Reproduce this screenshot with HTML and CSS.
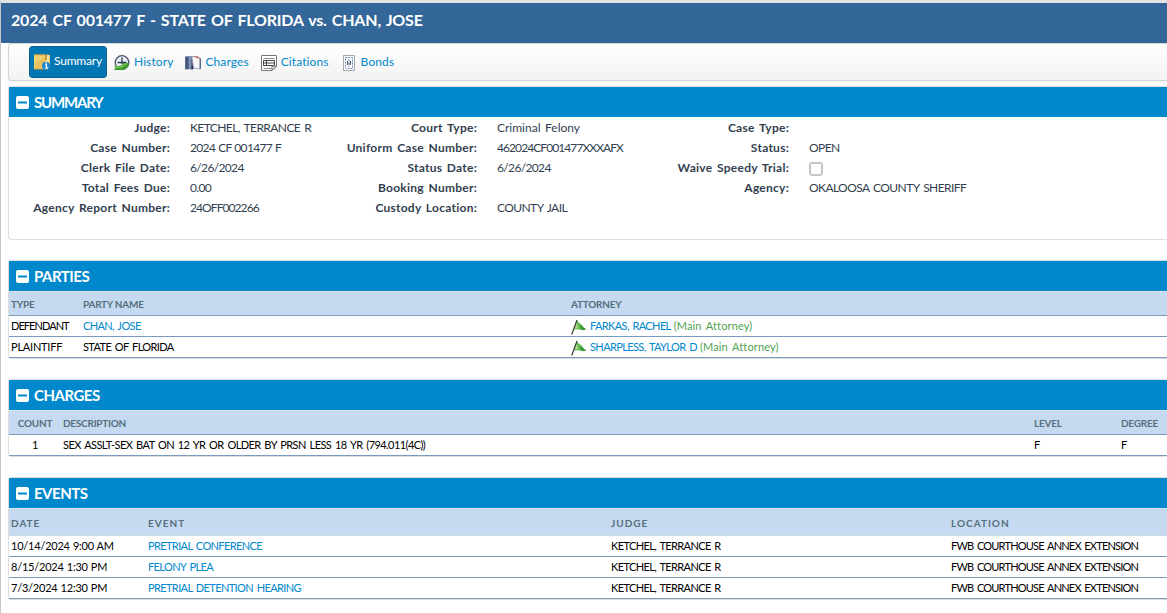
FILE: index.html
```
<!DOCTYPE html>
<html lang="en">
<head>
    <meta charset="UTF-8">
    <meta name="viewport" content="width=device-width, initial-scale=1.0">
    <title>2024 CF 001477 F</title>
    <link rel="stylesheet" href="styles.css">
</head>
<body>
    <svg class="sprites" xmlns="http://www.w3.org/2000/svg">
        <symbol id="minus" viewBox="0 0 13 13">
            <rect width="13" height="13" rx="2" fill="#fff"/>
            <rect x="2" y="5.5" width="9" height="2" fill="#0088cc"/>
        </symbol>
        <symbol id="flag" viewBox="0 0 16 16">
            <path d="M5.500 1C7 3 8.500 4.500 11 6c1 2 2 3.500 4.500 4.300-2.500 1.500-5 1.200-7.500 0L3 10.500z" fill="#5cb548"/>
            <path d="M5.500 2l2 7-4 1z" fill="#a5dc8b"/>
            <path d="M9 6l2 4.500 4-.2-3-2z" fill="#2f8f35"/>
            <path d="M6 1L.7 15.500" stroke="#3c3c3c" stroke-width="1.200" fill="none"/>
        </symbol>
    </svg>
    <div class="page">
        <header>
            <h1>2024 CF 001477 F - STATE OF FLORIDA vs. CHAN, JOSE</h1>
        </header>
        <nav class="toolbar">
            <a href="#" class="tab active">
                <svg width="16" height="16" viewBox="0 0 16 16">
                    <path d="M0 .5h15l1 1V14H14V15.500H0z" fill="#c99a3c"/>
                    <path d="M13 1h2.500v11H13z" fill="#f6e6a8"/>
                    <path d="M0 1h11v5h2v8.500H0z" fill="#f0cf73"/>
                    <path d="M0 .5h11v1H0z" fill="#d7a94a"/>
                    <path d="M1 9l10-6v11H1z" fill="#e3b64c" opacity=".6"/>
                    <circle cx="12" cy="11.800" r="4" fill="#1b86d0"/>
                    <path d="M11 10.800h1.500V14M11 14.200h3" stroke="#fff" stroke-width="1.200" fill="none"/>
                    <rect x="11.300" y="8.300" width="1.500" height="1.300" fill="#fff"/>
                </svg>
                <span>Summary</span>
            </a>
            <a href="#" class="tab">
                <svg width="16" height="16" viewBox="0 0 16 16">
                    <circle cx="8" cy="7.500" r="6.800" fill="#e9eff5" stroke="#49566a" stroke-width="1.300"/>
                    <path d="M8 2.500V9M3.500 7.500h9" stroke="#333e58" stroke-width="1.300"/>
                    <path d="M0 11.500L4 11c3 0 4.500-1 5-3h5.500v3c-1.500 3-5 4.200-9.500 4H0l1.500-2z" fill="#3e9c2f"/>
                    <path d="M1.500 12.300l3.500-.2c3 0 5-1.100 5.500-3h2" stroke="#9bdd72" stroke-width="1" fill="none"/>
                </svg>
                <span>History</span>
            </a>
            <a href="#" class="tab">
                <svg width="16" height="16" viewBox="0 0 16 16">
                    <path d="M0 1.500L7 1V14L0 14.500z" fill="#5a6d96"/>
                    <path d="M1.500 2.500h1V14h-1z" fill="#303e63"/>
                    <path d="M4 1.500L7 1v9l-2 4H4z" fill="#8494b5"/>
                    <path d="M7 1.500h5l3.500 2V14l-7 -1z" fill="#f7f7f9" stroke="#8791a8" stroke-width=".8"/>
                    <path d="M6.500 3l2 11-2 1z" fill="#2f3a58"/>
                    <path d="M8 1.500l4.500.3 3 2.500z" fill="#d34a3c"/>
                    <path d="M14.500 3.500H16V13.500h-1.500z" fill="#5c6780"/>
                </svg>
                <span>Charges</span>
            </a>
            <a href="#" class="tab">
                <svg width="16" height="16" viewBox="0 0 16 16">
                    <path d="M.5.500h15v10.500l-4.500 4.500H.5z" fill="#fff" stroke="#777"/>
                    <path d="M2.500 3.500h11M2.500 13.500h8" stroke="#888" fill="none"/>
                    <path d="M2.500 5.500h11v5h-11zM2.500 8h11M5.500 5.500v5" stroke="#444" fill="none"/>
                    <path d="M11 15.500V11h4.500z" fill="#eee" stroke="#777"/>
                </svg>
                <span>Citations</span>
            </a>
            <a href="#" class="tab bonds">
                <svg width="12" height="16" viewBox="0 0 12 16">
                    <rect x=".5" y=".5" width="11" height="15" fill="#fff" stroke="#a9a9a9"/>
                    <rect x="2.500" y="2.500" width="7" height="11" fill="none" stroke="#6b8bc0" stroke-dasharray="2 1"/>
                    <path d="M4.500 6v4M6 4.500v1.500M6 7v3M7.500 6v4M6 11v1" stroke="#4a5a78"/>
                </svg>
                <span>Bonds</span>
            </a>
        </nav>

        <section class="panel summary">
            <h2><svg width="13" height="13"><use href="#minus"/></svg>SUMMARY</h2>
            <div class="fields">
                <b>Judge:</b><span>KETCHEL, TERRANCE R</span>
                <b>Court Type:</b><span class="mixed">Criminal Felony</span>
                <b>Case Type:</b><span></span>

                <b>Case Number:</b><span class="num">2024 CF 001477 F</span>
                <b>Uniform Case Number:</b><span class="ucn">462024CF001477XXXAFX</span>
                <b>Status:</b><span>OPEN</span>

                <b>Clerk File Date:</b><span class="num">6/26/2024</span>
                <b>Status Date:</b><span class="num">6/26/2024</span>
                <b>Waive Speedy Trial:</b><span><i class="checkbox"></i></span>

                <b>Total Fees Due:</b><span class="num">0.00</span>
                <b>Booking Number:</b><span></span>
                <b>Agency:</b><span>OKALOOSA COUNTY SHERIFF</span>

                <b>Agency Report Number:</b><span class="ucn">24OFF002266</span>
                <b>Custody Location:</b><span>COUNTY JAIL</span>
            </div>
        </section>

        <section class="panel parties">
            <h2><svg width="13" height="13"><use href="#minus"/></svg>PARTIES</h2>
            <table>
                <thead>
                    <tr><th class="type">TYPE</th><th class="name">PARTY NAME</th><th>ATTORNEY</th></tr>
                </thead>
                <tbody>
                    <tr>
                        <td class="defendant">DEFENDANT</td>
                        <td><a href="#">CHAN, JOSE</a></td>
                        <td><div class="attorney"><svg width="16" height="16"><use href="#flag"/></svg><a href="#">FARKAS, RACHEL</a> <em>(Main Attorney)</em></div></td>
                    </tr>
                    <tr>
                        <td class="when">PLAINTIFF</td>
                        <td>STATE OF FLORIDA</td>
                        <td><div class="attorney"><svg width="16" height="16"><use href="#flag"/></svg><a href="#">SHARPLESS, TAYLOR D</a> <em>(Main Attorney)</em></div></td>
                    </tr>
                </tbody>
            </table>
        </section>

        <section class="panel charges">
            <h2><svg width="13" height="13"><use href="#minus"/></svg>CHARGES</h2>
            <table>
                <thead>
                    <tr><th class="count">COUNT</th><th class="description">DESCRIPTION</th><th class="level">LEVEL</th><th>DEGREE</th></tr>
                </thead>
                <tbody>
                    <tr><td class="count">1</td><td class="statute">SEX ASSLT-SEX BAT ON 12 YR OR OLDER BY PRSN LESS 18 YR (794.011(4C))</td><td>F</td><td>F</td></tr>
                </tbody>
            </table>
        </section>

        <section class="panel events">
            <h2><svg width="13" height="13"><use href="#minus"/></svg>EVENTS</h2>
            <table>
                <thead>
                    <tr><th class="date">DATE</th><th class="event">EVENT</th><th class="judge">JUDGE</th><th>LOCATION</th></tr>
                </thead>
                <tbody>
                    <tr><td class="when">10/14/2024 9:00 AM</td><td><a href="#">PRETRIAL CONFERENCE</a></td><td>KETCHEL, TERRANCE R</td><td class="location">FWB COURTHOUSE ANNEX EXTENSION</td></tr>
                    <tr><td class="when">8/15/2024 1:30 PM</td><td><a href="#">FELONY PLEA</a></td><td>KETCHEL, TERRANCE R</td><td class="location">FWB COURTHOUSE ANNEX EXTENSION</td></tr>
                    <tr><td class="when">7/3/2024 12:30 PM</td><td><a href="#">PRETRIAL DETENTION HEARING</a></td><td>KETCHEL, TERRANCE R</td><td class="location">FWB COURTHOUSE ANNEX EXTENSION</td></tr>
                </tbody>
            </table>
        </section>
    </div>
</body>
</html>
```
FILE: styles.css
```
* {
    box-sizing: border-box;
}

body {
    margin: 0;
    height: 613px;
    background: #fff;
    color: #000;
    font-family: Lato, sans-serif;
    font-size: 11px;
    overflow: hidden;
    white-space: nowrap;
}

a {
    color: #0088cc;
    text-decoration: none;
}

.sprites {
    display: none;
}

.page {
    min-height: 613px;
    border-top: 3px solid #e2e2e2;
    border-left: 1px solid #c8c8c8;
}

header {
    height: 40px;
    padding-left: 10px;
    background: #336699;
}

h1 {
    margin: 0;
    color: #fff;
    font-size: 16px;
    font-weight: 700;
    line-height: 34px;
    letter-spacing: -0.2px;
    word-spacing: 1.5px;
}

.toolbar {
    display: flex;
    align-items: flex-start;
    height: 38px;
    margin-left: 7px;
    padding: 3px 0 0 20px;
    border: 1px solid #d4d4d4;
    border-right: 0;
    border-radius: 4px 0 0 4px;
    background: linear-gradient(#ffffff, #f2f2f2);
    box-shadow: 0 1px 3px rgba(0, 0, 0, 0.06);
    margin-bottom: 5px;
}

.tab {
    display: flex;
    align-items: center;
    gap: 4px;
    height: 31px;
    margin-right: 4px;
    padding: 0 4px;
    border-radius: 4px;
    font-size: 12px;
    letter-spacing: 0.1px;
}

.tab span {
    margin-top: -3px;
}

.tab.active {
    margin-top: -1px;
    height: 32px;
    margin-right: 3px;
    padding: 0 4px;
    border: 1px dotted #16466a;
    background: #0077b3;
    color: #fff;
    letter-spacing: -0.2px;
}

.bonds svg {
    margin-left: 2px;
}

.bonds {
    gap: 6px;
}

.panel {
    margin: 0 0 20px 7px;
    border: 1px solid #dddddd;
    border-right: 0;
    border-radius: 4px 0 0 4px;
}

h2 {
    display: flex;
    align-items: center;
    gap: 5px;
    height: 30px;
    margin: 0;
    padding: 0 0 0 7px;
    background: #0088cc;
    color: #fff;
    font-size: 15px;
    font-weight: 700;
    letter-spacing: -0.5px;
}

.summary {
    height: 154px;
}

.summary h2 {
    letter-spacing: -1.2px;
}

.fields {
    display: grid;
    grid-template-columns: 161px 122px 145px 130px 142px 1fr;
    column-gap: 20px;
    grid-auto-rows: 20px;
    padding-top: 1px;
    color: #333f50;
    font-size: 12px;
    line-height: 20px;
    letter-spacing: -0.58px;
    word-spacing: 1.5px;
}

.fields b {
    text-align: right;
    letter-spacing: 0.25px;
}

.fields .num {
    letter-spacing: -0.65px;
    word-spacing: 0.5px;
}

.fields .ucn {
    letter-spacing: -0.92px;
}

.fields .mixed {
    letter-spacing: 0;
}

.checkbox {
    display: block;
    width: 14px;
    height: 14px;
    margin-top: 4px;
    border: 2px solid #c5c5cc;
    border-radius: 3px;
    background: #fff;
}

table {
    width: 100%;
    table-layout: fixed;
    border-collapse: separate;
    border-spacing: 0;
    border-top: 1px solid #dde4ec;
}

th {
    height: 24px;
    padding: 0 2px;
    border-bottom: 1px solid #7a9abf;
    background: #c5d9f1;
    color: #55707c;
    font-size: 10px;
    font-weight: 700;
    text-align: left;
    letter-spacing: -0.25px;
}

td {
    height: 21px;
    padding: 0 2px;
    border-bottom: 1px solid #7a9abf;
    line-height: 18px;
    letter-spacing: -0.62px;
    word-spacing: 1.5px;
}

.attorney {
    display: flex;
    align-items: center;
    gap: 3px;
    height: 20px;
}

.attorney svg {
    margin-top: 2px;
}

em {
    color: #51a351;
    font-style: normal;
    letter-spacing: 0.15px;
}

.defendant {
    letter-spacing: -0.95px;
}

.statute {
    letter-spacing: -0.57px;
}

.when {
    letter-spacing: -0.22px;
    word-spacing: 0.5px;
}

.location {
    letter-spacing: -0.79px;
}

.type {
    width: 72px;
}

.name {
    width: 488px;
}

.count {
    width: 52px;
    text-align: center;
}

.description {
    width: 971px;
}

.level {
    width: 87px;
}

.events th {
    height: 27px;
    padding-top: 2px;
    border-bottom-color: #d3dce6;
    letter-spacing: 1px;
}

.date {
    width: 137px;
}

.event {
    width: 463px;
}

.judge {
    width: 340px;
}
```
